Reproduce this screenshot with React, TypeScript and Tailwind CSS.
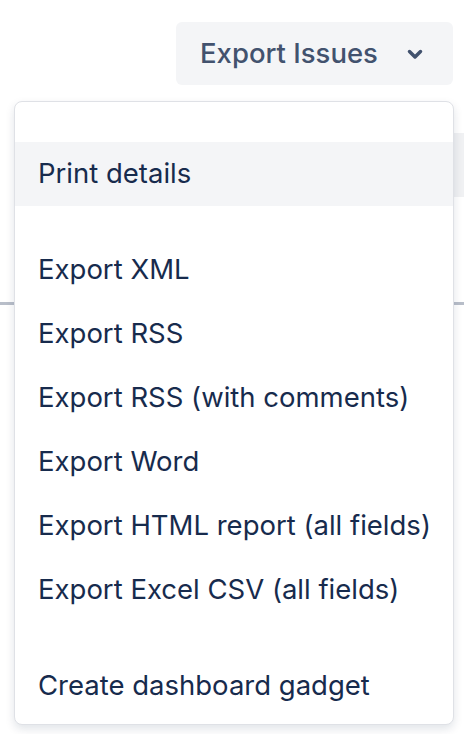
const sections: string[][] = [
  ["Print details"],
  [
    "Export XML",
    "Export RSS",
    "Export RSS (with comments)",
    "Export Word",
    "Export HTML report (all fields)",
    "Export Excel CSV (all fields)",
  ],
  ["Create dashboard gadget"],
];

export default function App() {
  return (
    <div
      className="relative w-[464px] h-[734px] overflow-hidden bg-white"
      style={{ fontFamily: "Inter, 'Noto Sans', sans-serif" }}
    >
      {/* header */}
      <div className="flex justify-end pt-[22px] pr-[11px]">
        <button className="flex items-center h-[63px] w-[277px] pl-[24px] rounded-[6px] bg-[#f4f5f7] text-[#42526e] text-[27.5px] font-medium">
          Export Issues
          <svg
            width="16"
            height="11"
            viewBox="0 0 16 11"
            className="ml-[29px] mt-[2px]"
            fill="none"
            stroke="currentColor"
            strokeWidth="3.5"
            strokeLinecap="round"
            strokeLinejoin="round"
          >
            <polyline points="2.5,2.5 8,8 13.5,2.5" />
          </svg>
        </button>
      </div>

      {/* page content under the menu */}
      <div className="mt-[48px] flex justify-end">
        <div className="h-[64px] w-[40px] rounded-l-[8px] bg-[#f0f1f3]" />
      </div>
      <div className="mt-[105px] h-[3px] bg-[#b8bec9]" />

      {/* menu */}
      <div className="absolute left-[14px] top-[101px] w-[440px] rounded-[8px] border border-[#dfe1e6] bg-white pt-[40px] pb-[6px] shadow-[0_4px_10px_rgba(9,30,66,0.12)]">
        {sections.map((items, i) => (
          <div key={i} className={i > 0 ? "mt-[32px]" : ""}>
            {items.map((label) => (
              <div
                key={label}
                className={`flex items-center h-[64px] pl-[23px] text-[27.5px] text-[#172b4d] ${
                  label === "Print details" ? "bg-[#f4f5f7]" : ""
                }`}
              >
                {label}
              </div>
            ))}
          </div>
        ))}
      </div>
    </div>
  );
}
